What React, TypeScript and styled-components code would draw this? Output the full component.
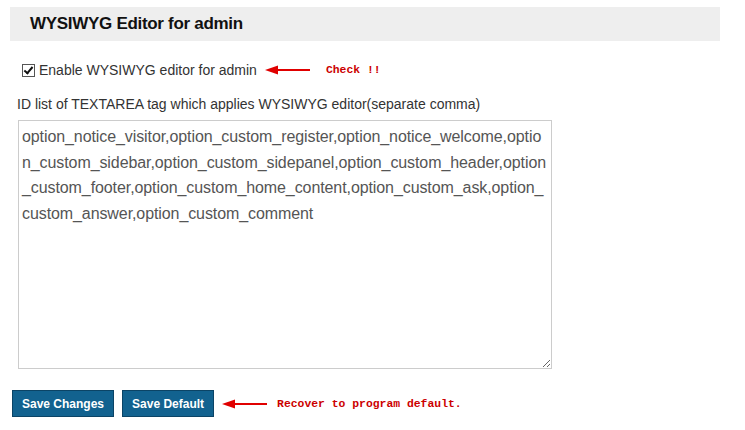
import styled, { createGlobalStyle } from "styled-components";

const GlobalStyle = createGlobalStyle`
  html, body {
    margin: 0;
    padding: 0;
    background: #ffffff;
  }
  body {
    font-family: "Liberation Sans", Arial, sans-serif;
    color: #333333;
  }
`;

const Page = styled.div`
  width: 745px;
  height: 430px;
  padding: 7px 25px 0 10px;
  box-sizing: border-box;
`;

const SectionTitle = styled.h3`
  margin: 0;
  height: 34px;
  padding: 0 20px;
  display: flex;
  align-items: center;
  background: #eeeeee;
  font-size: 17px;
  font-weight: bold;
  letter-spacing: -0.3px;
  color: #111111;
`;

const Body = styled.div`
  padding: 21px 0 0 7px;
`;

const CheckRow = styled.label`
  display: flex;
  align-items: center;
  height: 16px;
  font-size: 14px;
  color: #333333;
  padding-left: 5px;
`;

const Checkbox = styled.input`
  appearance: none;
  position: relative;
  width: 13px;
  height: 13px;
  margin: 0 4px 0 0;
  border: 1px solid #555555;
  background: #ffffff;
  box-sizing: border-box;

  &:checked::after {
    content: "";
    position: absolute;
    left: 3px;
    top: 0px;
    width: 3px;
    height: 7px;
    border: solid #111111;
    border-width: 0 2px 2px 0;
    transform: rotate(40deg);
  }
`;

const Note = styled.span<{ $gap: number; $offset: number }>`
  display: flex;
  align-items: center;
  font-family: "Liberation Mono", "Courier New", monospace;
  font-weight: bold;
  font-size: 11.4px;
  color: #cc0000;
  gap: ${(p) => p.$gap}px;
  margin-left: ${(p) => p.$offset}px;
`;

const Arrow = () => (
  <svg width="45" height="10" viewBox="0 0 45 10">
    <polygon points="0,5 13,0.5 13,9.5" fill="#e00000" />
    <rect x="10" y="4" width="35" height="2" fill="#e00000" />
  </svg>
);

const FieldLabel = styled.div`
  margin-top: 18px;
  font-size: 14px;
  color: #333333;
`;

const IdList = styled.textarea`
  display: block;
  margin: 8px 0 0 1px;
  width: 534px;
  height: 249px;
  box-sizing: border-box;
  padding: 3px 3px;
  border: 1px solid #cccccc;
  border-radius: 0;
  font-family: "Liberation Sans", Arial, sans-serif;
  font-size: 16px;
  letter-spacing: -0.09px;
  line-height: 25.5px;
  color: #555555;
  word-break: break-all;
  outline: none;
`;

const ButtonRow = styled.div`
  display: flex;
  align-items: center;
  gap: 8px;
  margin: 21px 0 0 2px;
`;

const Button = styled.button`
  height: 27px;
  padding: 0 9px;
  background: #12628f;
  border: 1px solid #0b4466;
  border-radius: 0;
  color: #ffffff;
  font-family: "Liberation Sans", Arial, sans-serif;
  font-size: 12px;
  font-weight: bold;
  cursor: pointer;
`;

export default function App() {
  return (
    <>
      <GlobalStyle />
      <Page>
        <SectionTitle>WYSIWYG Editor for admin</SectionTitle>
        <Body>
          <CheckRow>
            <Checkbox type="checkbox" defaultChecked />
            Enable WYSIWYG editor for admin
            <Note $gap={16} $offset={8}>
              <Arrow />
              Check !!
            </Note>
          </CheckRow>
          <FieldLabel>
            ID list of TEXTAREA tag which applies WYSIWYG editor(separate comma)
          </FieldLabel>
          <IdList
            defaultValue="option_notice_visitor,option_custom_register,option_notice_welcome,option_custom_sidebar,option_custom_sidepanel,option_custom_header,option_custom_footer,option_custom_home_content,option_custom_ask,option_custom_answer,option_custom_comment"
          />
        </Body>
        <ButtonRow>
          <Button>Save Changes</Button>
          <Button>Save Default</Button>
          <Note $gap={10} $offset={0}>
            <Arrow />
            Recover to program default.
          </Note>
        </ButtonRow>
      </Page>
    </>
  );
}
